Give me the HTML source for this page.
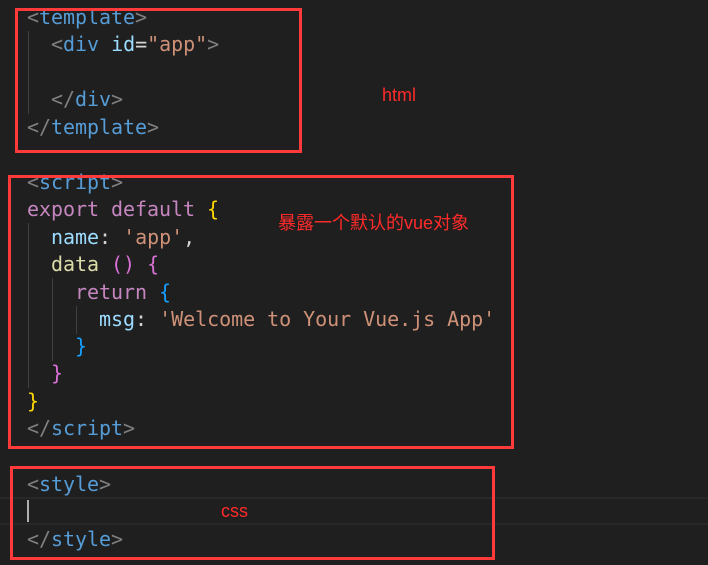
<!DOCTYPE html>
<html><head><meta charset="utf-8"><style>
html,body{margin:0;padding:0;}
body{width:708px;height:565px;background:#1f1f1f;position:relative;overflow:hidden;font-family:"DejaVu Sans Mono","Liberation Mono",monospace;font-size:20px;}
.l{position:absolute;left:27px;height:27px;line-height:27px;white-space:pre;color:#ccc;letter-spacing:-0.04px}
.g{color:#808080}.t{color:#569cd6}.a{color:#9cdcfe}.s{color:#ce9178}.k{color:#c586c0}.y{color:#ffd700}.m{color:#da70d6}.b{color:#179fff}.f{color:#dcdcaa}.w{color:#d4d4d4}
.box{position:absolute;border:3px solid #fe3a3a;box-sizing:border-box}
.guide{position:absolute;width:1px;background:#404040}
.note{position:absolute;color:#ff2a2a;font-family:"Liberation Sans","Noto Sans CJK SC",sans-serif;font-size:18px}
</style></head><body>
<div style="position:absolute;left:0;top:497px;width:708px;height:28px;border-top:2px solid #282828;border-bottom:2px solid #282828;box-sizing:border-box"></div>
<div style="position:absolute;left:27px;top:500px;width:2px;height:22px;background:#aeafad"></div>
<div class="guide" style="left:28px;top:31px;height:83px"></div>
<div class="guide" style="left:28px;top:223px;height:165px"></div>
<div class="guide" style="left:52px;top:278px;height:83px"></div>
<div class="guide" style="left:76px;top:306px;height:28px"></div>

<div class="l" style="top:4px"><span class="g">&lt;</span><span class="t">template</span><span class="g">&gt;</span></div>
<div class="l" style="top:31px">  <span class="g">&lt;</span><span class="t">div</span> <span class="a">id</span><span class="w">=</span><span class="s">"app"</span><span class="g">&gt;</span></div>
<div class="l" style="top:86px">  <span class="g">&lt;/</span><span class="t">div</span><span class="g">&gt;</span></div>
<div class="l" style="top:114px"><span class="g">&lt;/</span><span class="t">template</span><span class="g">&gt;</span></div>

<div class="l" style="top:169px"><span class="g">&lt;</span><span class="t">script</span><span class="g">&gt;</span></div>
<div class="l" style="top:196px"><span class="k">export default</span> <span class="y">{</span></div>
<div class="l" style="top:224px">  <span class="a">name</span><span class="w">:</span> <span class="s">'app'</span><span class="w">,</span></div>
<div class="l" style="top:251px">  <span class="f">data</span> <span class="m">()</span> <span class="m">{</span></div>
<div class="l" style="top:279px">    <span class="k">return</span> <span class="b">{</span></div>
<div class="l" style="top:306px">      <span class="a">msg</span><span class="w">:</span> <span class="s">'Welcome to Your Vue.js App'</span></div>
<div class="l" style="top:333px">    <span class="b">}</span></div>
<div class="l" style="top:360px">  <span class="m">}</span></div>
<div class="l" style="top:388px"><span class="y">}</span></div>
<div class="l" style="top:415px"><span class="g">&lt;/</span><span class="t">script</span><span class="g">&gt;</span></div>

<div class="l" style="top:471px"><span class="g">&lt;</span><span class="t">style</span><span class="g">&gt;</span></div>
<div class="l" style="top:526px"><span class="g">&lt;/</span><span class="t">style</span><span class="g">&gt;</span></div>

<div class="box" style="left:15px;top:8px;width:287px;height:145px"></div>
<div class="box" style="left:8px;top:175px;width:506px;height:274px"></div>
<div class="box" style="left:10px;top:466px;width:485px;height:94px"></div>

<div class="note" style="left:382px;top:85px">html</div>
<div class="note" style="left:278px;top:209px">暴露一个默认的vue对象</div>
<div class="note" style="left:221px;top:501px">css</div>
</body></html>
